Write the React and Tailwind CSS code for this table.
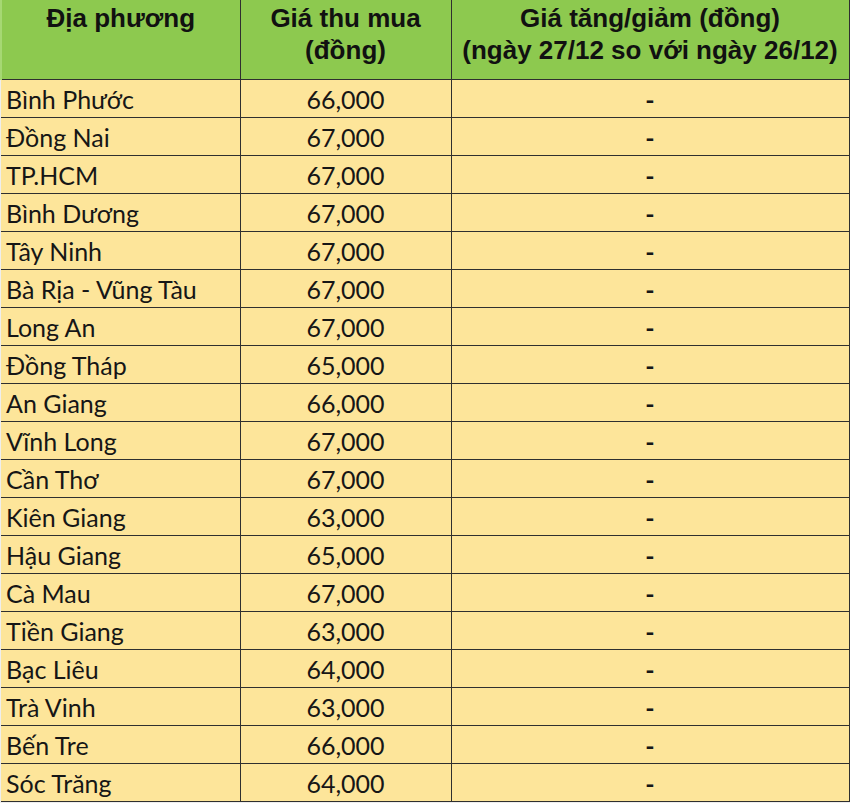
import React from "react";

const rows = [
  ["Bình Phước", "66,000"],
  ["Đồng Nai", "67,000"],
  ["TP.HCM", "67,000"],
  ["Bình Dương", "67,000"],
  ["Tây Ninh", "67,000"],
  ["Bà Rịa - Vũng Tàu", "67,000"],
  ["Long An", "67,000"],
  ["Đồng Tháp", "65,000"],
  ["An Giang", "66,000"],
  ["Vĩnh Long", "67,000"],
  ["Cần Thơ", "67,000"],
  ["Kiên Giang", "63,000"],
  ["Hậu Giang", "65,000"],
  ["Cà Mau", "67,000"],
  ["Tiền Giang", "63,000"],
  ["Bạc Liêu", "64,000"],
  ["Trà Vinh", "63,000"],
  ["Bến Tre", "66,000"],
  ["Sóc Trăng", "64,000"],
];

export default function App() {
  return (
    <div className="w-[850px] h-[803px] bg-[#eeeeee] overflow-hidden">
      <table className="table-fixed border-collapse w-[848px] text-[#161616]">
        <colgroup>
          <col className="w-[239px]" />
          <col className="w-[211px]" />
          <col className="w-[398px]" />
        </colgroup>
        <thead>
          <tr className="h-[79px] bg-[#8dc94f] font-['Liberation_Sans',Arial,sans-serif] font-bold text-[26px] leading-[32px] text-[#111]">
            <th className="align-top pt-[2px] border-r border-b border-[#2f2f2f] border-l-2 border-l-[#a6d873]">
              Địa phương
            </th>
            <th className="align-top pt-[2px] border-r border-b border-[#2f2f2f]">
              Giá thu mua
              <br />
              (đồng)
            </th>
            <th className="align-top pt-[2px] border-r border-b border-[#2f2f2f] whitespace-nowrap">
              Giá tăng/giảm (đồng)
              <br />
              (ngày 27/12 so với ngày 26/12)
            </th>
          </tr>
        </thead>
        <tbody className="bg-[#fde59a] font-['Lato','Open_Sans',sans-serif] text-[25px]">
          {rows.map(([place, price]) => (
            <tr key={place} className="h-[38px]">
              <td className="pl-[5px] pt-[3px] leading-none border-r border-b border-[#2f2f2f] whitespace-nowrap">
                {place}
              </td>
              <td className="text-center pt-[3px] leading-none border-r border-b border-[#2f2f2f]">
                {price}
              </td>
              <td className="text-center pt-[3px] leading-none font-bold border-r border-b border-[#2f2f2f]">
                -
              </td>
            </tr>
          ))}
        </tbody>
      </table>
    </div>
  );
}
